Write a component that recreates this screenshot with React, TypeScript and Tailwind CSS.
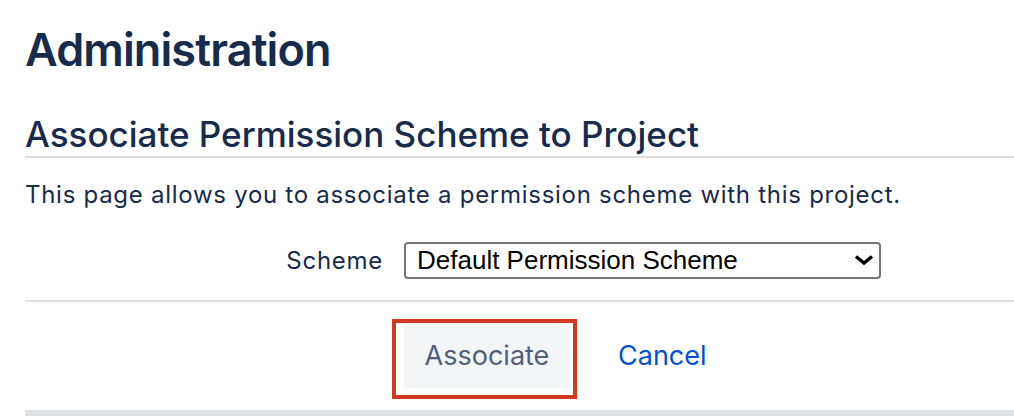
const font = { fontFamily: "Inter, 'Noto Sans', sans-serif" };

export default function App() {
    return (
        <div className="w-[1014px] h-[416px] overflow-hidden bg-white pl-[25px] text-[#172b4d] font-['Inter',sans-serif]">
            <h1 className="pt-[22px] text-[45px] leading-[56px] font-semibold tracking-[-0.02em]">
                Administration
            </h1>

            <h2 className="mt-[36px] text-[35px] leading-[40px] font-medium border-b-2 border-[#dcdcdc] pb-[2px]">
                Associate Permission Scheme to Project
            </h2>

            <p className="mt-[22px] text-[24px] leading-[30px] tracking-[0.03em]">
                This page allows you to associate a permission scheme with this project.
            </p>

            {/* Form row */}
            <div className="mt-[32px] grid grid-cols-[358px_1fr] items-center gap-x-[21px] pb-[21px] border-b-2 border-[#e0e0e0]">
                <label className="text-right text-[24px] leading-[30px] tracking-[0.03em]">Scheme</label>
                <div className="relative w-[477px]">
                    <select
                        className="block appearance-none w-full h-[37px] border-2 border-[#767676] rounded-[4px] bg-white pl-[11px] text-[26px] leading-[33px] text-black font-['Liberation_Sans',Arial,sans-serif] outline-none"
                        defaultValue="default"
                    >
                        <option value="default">Default Permission Scheme</option>
                    </select>
                    <svg
                        className="absolute right-[7px] top-[13px] pointer-events-none"
                        width="20"
                        height="10"
                        viewBox="0 0 20 10"
                        fill="none"
                    >
                        <polyline points="2,1.5 10,8 18,1.5" stroke="black" strokeWidth="3.5" strokeLinejoin="miter" />
                    </svg>
                </div>
            </div>

            {/* Buttons */}
            <div className="pt-[22px] pb-[22px] flex items-center gap-[48px] pl-[379px]">
                <div className="relative">
                    <button className="block w-[166px] h-[64px] rounded-[3px] bg-[#f4f5f7] text-[27px] text-[#505f79]" style={font}>
                        Associate
                    </button>
                    <div className="absolute -left-[12px] -top-[5px] -right-[7px] -bottom-[11px] border-4 border-[#d13a20] pointer-events-none" />
                </div>
                <a href="#" className="text-[27px] text-[#0052cc]">
                    Cancel
                </a>
            </div>

            <div className="h-[6px] bg-[#dfe1e6]" />
        </div>
    );
}
